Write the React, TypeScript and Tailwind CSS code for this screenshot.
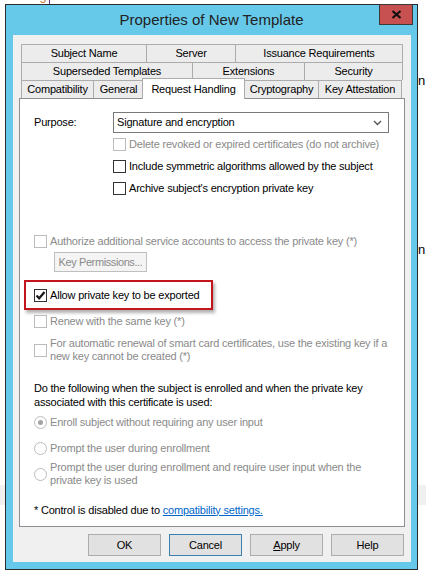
import React from "react";

const disabledText = "text-[#8a8a8a]";

const Check = ({ checked, disabled }: { checked?: boolean; disabled?: boolean }) => (
  <span
    className={`flex w-[13px] h-[13px] shrink-0 items-center justify-center border bg-white ${
      disabled ? "border-[#bcbcbc]" : "border-[#333333]"
    }`}
  >
    {checked && (
      <svg width="11" height="11" viewBox="0 0 11 11">
        <path d="M1.5 5.5 L4.2 8.3 L9.5 2" fill="none" stroke="#1a1a1a" strokeWidth="2.2" />
      </svg>
    )}
  </span>
);

const Radio = ({ checked }: { checked?: boolean }) => (
  <span className="flex w-[13px] h-[13px] shrink-0 items-center justify-center rounded-full border border-[#bcbcbc] bg-white">
    {checked && <span className="w-[5px] h-[5px] rounded-full bg-[#a3a3a3]" />}
  </span>
);

const Tab = ({ label, w, last }: { label: string; w: string; last?: boolean }) => (
  <div
    className={`${w} h-[18px] flex items-center justify-center whitespace-nowrap border-t border-l border-[#acacac] bg-[#ececec] ${
      last ? "border-r" : ""
    }`}
  >
    {label}
  </div>
);

const Btn = ({ children, focus }: { children: React.ReactNode; focus?: boolean }) => (
  <div
    className={`w-[73px] h-[22px] flex items-center justify-center border bg-[#e1e1e1] ${
      focus ? "border-[#3c7fb1]" : "border-[#adadad]"
    }`}
  >
    {children}
  </div>
);

export default function App() {
  return (
    <div className="relative w-[426px] h-[577px] overflow-hidden bg-white text-[11px] tracking-[-0.2px] text-black font-['Liberation_Sans',Arial,sans-serif]">
      {/* document behind the dialog */}
      <div className="absolute left-0 right-0 top-[485px] h-[20px] bg-[#f0f0f0]" />
      <span className="absolute left-[418px] top-[71px] text-[13px]">n</span>
      <span className="absolute left-[418px] top-[240px] text-[13px]">n,</span>
      <span className="absolute left-[40px] -top-[9px] text-[11px] text-[#c46a1a]">5</span>
      <span className="absolute left-[49px] top-0 w-px h-[4px] bg-[#7a2a8a]" />

      <div className="relative pl-[5px] pt-[4px]">
        <div className="w-[413px] h-[566px] flex flex-col border border-[#2b2b2b] bg-[#66c9ea]">
          <div className="h-[30px] flex">
            <div className="w-[38px]" />
            <div className="flex-1 flex items-center justify-center pt-[1px] text-[15px] tracking-normal text-[#222]">
              Properties of New Template
            </div>
            <div className="w-[34px] h-[21px] -mt-px mr-[4px] flex items-center justify-center border border-[#3a3a3a] bg-[#c75050]">
              <svg width="11" height="9" viewBox="0 0 11 9">
                <path d="M1.5 1 L9.5 8 M9.5 1 L1.5 8" stroke="#111" strokeWidth="2.2" />
              </svg>
            </div>
          </div>

          <div className="flex-1 ml-[7px] mr-[6px] mb-[7px] bg-[#f0f0f0] pl-[6px] pt-[9px]">
            <div className="w-[386px]">
              <div className="flex px-[2px]">
                <Tab label="Subject Name" w="w-[125px]" />
                <Tab label="Server" w="w-[89px]" />
                <Tab label="Issuance Requirements" w="w-[168px]" last />
              </div>
              <div className="flex px-[2px]">
                <Tab label="Superseded Templates" w="w-[171px]" />
                <Tab label="Extensions" w="w-[112px]" />
                <Tab label="Security" w="w-[99px]" last />
              </div>
              <div className="flex px-[2px]">
                <Tab label="Compatibility" w="w-[72px]" />
                <Tab label="General" w="w-[50px]" />
                <div className="relative z-10 w-[103px] h-[21px] -mt-[2px] -mb-px -mx-px flex items-start justify-center pt-[2px] whitespace-nowrap border-t border-l border-r border-[#acacac] bg-white">
                  Request Handling
                </div>
                <Tab label="Cryptography" w="w-[74px]" />
                <Tab label="Key Attestation" w="w-[84px]" last />
              </div>

              <div className="w-[386px] h-[429px] border border-[#8c8e94] bg-white px-[14px] pt-[13px] whitespace-nowrap">
                <div className="flex items-center h-[21px]">
                  <span className="w-[79px]">Purpose:</span>
                  <div className="w-[276px] h-[21px] flex items-center justify-between border border-[#7a7a7a] pl-[3px] pr-[6px]">
                    <span>Signature and encryption</span>
                    <svg width="9" height="6" viewBox="0 0 9 6">
                      <path d="M1 1 L4.5 4.5 L8 1" fill="none" stroke="#555" strokeWidth="1.4" />
                    </svg>
                  </div>
                </div>
                <div className="pl-[79px]">
                  <div className={`flex items-center gap-[3px] h-[22px] ${disabledText}`}>
                    <Check disabled />
                    <span>Delete revoked or expired certificates (do not archive)</span>
                  </div>
                  <div className="flex items-center gap-[3px] h-[22px]">
                    <Check />
                    <span>Include symmetric algorithms allowed by the subject</span>
                  </div>
                  <div className="flex items-center gap-[3px] h-[22px]">
                    <Check />
                    <span>Archive subject's encryption private key</span>
                  </div>
                </div>

                <div className={`mt-[31px] flex items-center gap-[3px] h-[22px] ${disabledText}`}>
                  <Check disabled />
                  <span>Authorize additional service accounts to access the private key (*)</span>
                </div>
                <div className={`ml-[20px] w-[93px] h-[20px] flex items-center justify-center tracking-[-0.4px] border border-[#bfbfbf] bg-[#f4f4f4] ${disabledText}`}>
                  Key Permissions...
                </div>

                <div className="mt-[8px] -ml-[10px] w-[189px] h-[30px] flex items-center gap-[3px] pl-[8px] border-2 border-[#c3161c] shadow-[2px_3px_3px_rgba(0,0,0,0.3)]">
                  <Check checked />
                  <span>Allow private key to be exported</span>
                </div>
                <div className={`flex items-center gap-[3px] h-[22px] ${disabledText}`}>
                  <Check disabled />
                  <span>Renew with the same key (*)</span>
                </div>
                <div className={`mt-[5px] flex items-center gap-[3px] leading-[13px] ${disabledText}`}>
                  <Check disabled />
                  <span>
                    For automatic renewal of smart card certificates, use the existing key if a
                    <br />
                    new key cannot be created (*)
                  </span>
                </div>

                <div className="mt-[18px] leading-[14px]">
                  Do the following when the subject is enrolled and when the private key
                  <br />
                  associated with this certificate is used:
                </div>
                <div className={`mt-[2px] flex items-center gap-[3px] h-[22px] ${disabledText}`}>
                  <Radio checked />
                  <span>Enroll subject without requiring any user input</span>
                </div>
                <div className={`mt-[4px] flex items-center gap-[3px] h-[22px] ${disabledText}`}>
                  <Radio />
                  <span>Prompt the user during enrollment</span>
                </div>
                <div className={`mt-[2px] flex items-center gap-[3px] leading-[13px] ${disabledText}`}>
                  <Radio />
                  <span>
                    Prompt the user during enrollment and require user input when the
                    <br />
                    private key is used
                  </span>
                </div>

                <div className="mt-[12px] h-[22px] flex items-center">
                  <span>* Control is disabled due to&nbsp;</span>
                  <span className="text-[#0066cc] underline">compatibility settings.</span>
                </div>
              </div>

              <div className="mt-[7px] mr-px flex justify-end gap-[8px]">
                <Btn>OK</Btn>
                <Btn focus>Cancel</Btn>
                <Btn>
                  <span>
                    <span className="underline">A</span>pply
                  </span>
                </Btn>
                <Btn>Help</Btn>
              </div>
            </div>
          </div>
        </div>
      </div>
    </div>
  );
}
